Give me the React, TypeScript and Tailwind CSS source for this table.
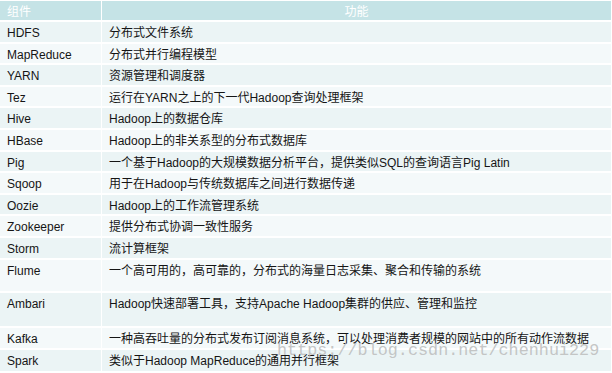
import React from 'react';

interface Row {
  name: string;
  desc: string;
  h: string;
}

const rows: Row[] = [
  { name: 'HDFS', desc: '分布式文件系统', h: 'h-[20px]' },
  { name: 'MapReduce', desc: '分布式并行编程模型', h: 'h-[19px]' },
  { name: 'YARN', desc: '资源管理和调度器', h: 'h-[20px]' },
  { name: 'Tez', desc: '运行在YARN之上的下一代Hadoop查询处理框架', h: 'h-[19px]' },
  { name: 'Hive', desc: 'Hadoop上的数据仓库', h: 'h-[20px]' },
  { name: 'HBase', desc: 'Hadoop上的非关系型的分布式数据库', h: 'h-[20px]' },
  { name: 'Pig', desc: '一个基于Hadoop的大规模数据分析平台，提供类似SQL的查询语言Pig Latin', h: 'h-[19px]' },
  { name: 'Sqoop', desc: '用于在Hadoop与传统数据库之间进行数据传递', h: 'h-[20px]' },
  { name: 'Oozie', desc: 'Hadoop上的工作流管理系统', h: 'h-[19px]' },
  { name: 'Zookeeper', desc: '提供分布式协调一致性服务', h: 'h-[20px]' },
  { name: 'Storm', desc: '流计算框架', h: 'h-[20px]' },
  { name: 'Flume', desc: '一个高可用的，高可靠的，分布式的海量日志采集、聚合和传输的系统', h: 'h-[31px]' },
  { name: 'Ambari', desc: 'Hadoop快速部署工具，支持Apache Hadoop集群的供应、管理和监控', h: 'h-[33px]' },
  { name: 'Kafka', desc: '一种高吞吐量的分布式发布订阅消息系统，可以处理消费者规模的网站中的所有动作流数据', h: 'h-[20px]' },
  { name: 'Spark', desc: '类似于Hadoop MapReduce的通用并行框架', h: 'h-[21px]' },
];

const App = () => {
  return (
    <div
      className="relative w-[612px] h-[373px] bg-white overflow-hidden pt-px font-['Liberation_Sans','Noto_Sans_CJK_SC',sans-serif] text-[12px] leading-[14px] text-[#151515]"
    >
      <div className="flex flex-col gap-y-[2px] w-[611px]">
        {/* header */}
        <div className="grid grid-cols-[101px_1fr] gap-x-px h-[19px] text-white">
          <div className="bg-[#c5e3e6] pl-[7px] pt-[4px]">组件</div>
          <div className="bg-[#c5e3e6] pt-[4px] text-center">功能</div>
        </div>

        {rows.map((row, i) => {
          const bg = i % 2 === 0 ? 'bg-[#ebf4f5]' : 'bg-[#f4f9fa]';
          return (
            <div key={row.name} className={`grid grid-cols-[101px_1fr] gap-x-px ${row.h}`}>
              <div className={`${bg} pl-[7px] pt-[4px] whitespace-nowrap`}>{row.name}</div>
              <div className={`${bg} pl-[7px] pt-[4px] whitespace-nowrap`}>{row.desc}</div>
            </div>
          );
        })}
      </div>

      {/* watermark */}
      <div className="absolute left-[277px] top-[343px] font-['Liberation_Mono',monospace] text-[16.8px] leading-none text-[#b8b8b8]/80 whitespace-nowrap pointer-events-none">
        https://blog.csdn.net/chenhui229
      </div>
    </div>
  );
};

export default App;
